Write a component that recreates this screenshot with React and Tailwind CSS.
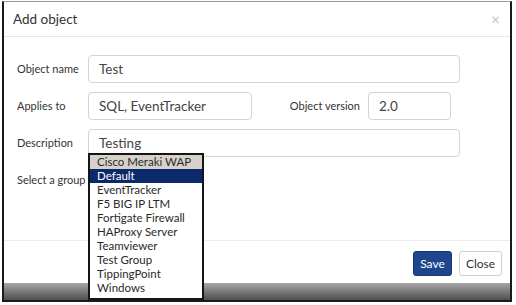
import React from "react";

const groups = [
  "Cisco Meraki WAP",
  "Default",
  "EventTracker",
  "F5 BIG IP LTM",
  "Fortigate Firewall",
  "HAProxy Server",
  "Teamviewer",
  "Test Group",
  "TippingPoint",
  "Windows",
];

function Field({ label, children }) {
  return (
    <div className="flex items-center h-[28px]">
      <label className="w-[71px] shrink-0 whitespace-nowrap text-[11px] text-[#333]">{label}</label>
      {children}
    </div>
  );
}

function TextBox({ value, width }) {
  return (
    <div
      className={`${width} h-[28px] flex items-center px-[10px] border border-[#d4d4d4] rounded-[4px] text-[13.5px] text-[#444]`}
    >
      {value}
    </div>
  );
}

export default function App() {
  return (
    <div className="w-[516px] h-[305px] bg-white overflow-hidden pt-[1px] font-['Lato',sans-serif]">
      <div className="relative ml-[2px] w-[510px] h-[301px] flex flex-col border-x-2 border-t border-b-2 border-x-[#1a1a1a] border-t-[#9a9a9a] border-b-[#1a1a1a]">
        {/* Header */}
        <div className="h-[35px] shrink-0 flex items-center justify-between pl-[9px] pr-[10px] border-b border-[#e8e8e8]">
          <h4 className="text-[13.5px] text-[#333]">Add object</h4>
          <span className="text-[15px] leading-none text-[#c4c4c4]">×</span>
        </div>

        {/* Body */}
        <div className="h-[203px] shrink-0 flex flex-col gap-[9px] pt-[18px] pl-[13px]">
          <Field label="Object name">
            <TextBox value="Test" width="w-[372px]" />
          </Field>
          <Field label="Applies to">
            <TextBox value="SQL, EventTracker" width="w-[164px]" />
            <div className="w-[199px] flex items-center justify-end gap-[8px]">
              <span className="text-[11px] text-[#333]">Object version</span>
              <TextBox value="2.0" width="w-[83px]" />
            </div>
          </Field>
          <Field label="Description">
            <TextBox value="Testing" width="w-[372px]" />
          </Field>
          <Field label="Select a group">
            <div className="w-[164px] h-[28px]" />
          </Field>
        </div>

        {/* Footer */}
        <div className="h-[43px] shrink-0 flex justify-end gap-[7px] pt-[10px] pr-[8px] border-t border-[#ececec]">
          <button className="w-[39px] h-[25px] rounded-[3px] bg-[#1f468c] border border-[#193a75] text-white text-[12px]">
            Save
          </button>
          <button className="w-[43px] h-[25px] rounded-[3px] bg-white border border-[#d0d0d0] text-[#333] text-[12px]">
            Close
          </button>
        </div>

        {/* Backdrop band */}
        <div className="flex-1 bg-gradient-to-b from-[#a8a8a8] via-[#7a7a7a] to-[#505050]" />

        {/* Open dropdown list */}
        <ul className="absolute left-[84px] top-[151px] w-[116px] border-2 border-[#151515] bg-white pb-[3px] text-[11.5px] text-[#2a2a2a]">
          {groups.map((g, i) => (
            <li
              key={g}
              className={`h-[14px] leading-[14px] pl-[7px] whitespace-nowrap ${
                i === 0 ? "bg-[#d6d2ca]" : i === 1 ? "bg-[#0c2a6b] text-white" : ""
              }`}
            >
              {g}
            </li>
          ))}
        </ul>
      </div>
    </div>
  );
}
